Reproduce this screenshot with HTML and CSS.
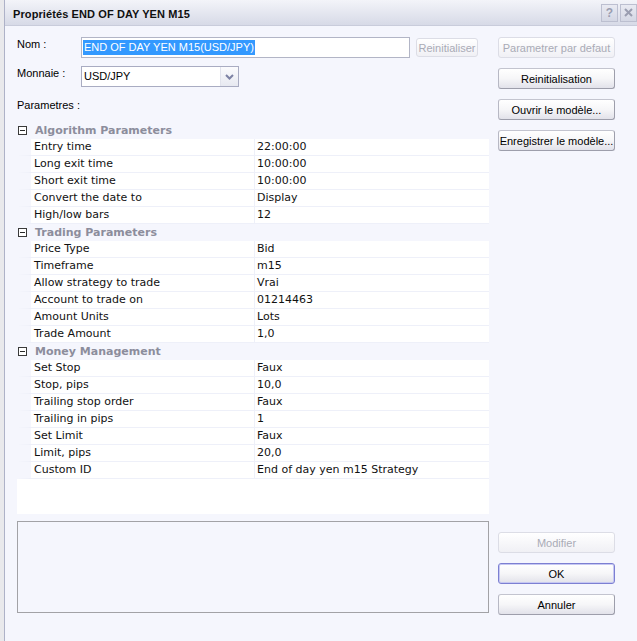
FILE: index.html
```html
<!DOCTYPE html>
<html lang="fr">
<head>
  <meta charset="UTF-8">
  <title>Propriétés END OF DAY YEN M15</title>
  <link rel="stylesheet" href="styles.css">
</head>

<body>
  <div class="screen">
    <div class="backdrop"></div>

    <div class="dialog">
      <!-- Barre de titre -->
      <div class="titlebar">
        <span class="title">Propriétés END OF DAY YEN M15</span>
        <div class="title-btns">
          <span class="tbtn">?</span>
          <span class="tbtn close">
            <svg width="9" height="9" viewBox="0 0 9 9"><path d="M1 1L8 8M8 1L1 8" stroke="#9a9db0" stroke-width="2"/></svg>
          </span>
        </div>
      </div>

      <div class="body">
        <!-- Colonne principale -->
        <div class="main">
          <div class="field-row">
            <span class="lbl">Nom :</span>
            <div class="textbox"><span class="sel">END OF DAY YEN M15(USD/JPY)</span></div>
            <button class="btn reset" disabled>Reinitialiser</button>
          </div>

          <div class="field-row second">
            <span class="lbl">Monnaie :</span>
            <div class="combo">
              <span class="combo-text">USD/JPY</span>
              <span class="combo-arrow">
                <svg width="9" height="6" viewBox="0 0 9 6"><path d="M1 1L4.5 4.5L8 1" stroke="#7d82a4" stroke-width="2" fill="none"/></svg>
              </span>
            </div>
          </div>

          <div class="section-lbl">Parametres :</div>

          <!-- Grille des proprietes -->
          <div class="grid">
            <div class="cat"><span class="toggle"></span>Algorithm Parameters</div>
            <div class="prop"><span class="name">Entry time</span><span class="val">22:00:00</span></div>
            <div class="prop"><span class="name">Long exit time</span><span class="val">10:00:00</span></div>
            <div class="prop"><span class="name">Short exit time</span><span class="val">10:00:00</span></div>
            <div class="prop"><span class="name">Convert the date to</span><span class="val">Display</span></div>
            <div class="prop"><span class="name">High/low bars</span><span class="val">12</span></div>

            <div class="cat"><span class="toggle"></span>Trading Parameters</div>
            <div class="prop"><span class="name">Price Type</span><span class="val">Bid</span></div>
            <div class="prop"><span class="name">Timeframe</span><span class="val">m15</span></div>
            <div class="prop"><span class="name">Allow strategy to trade</span><span class="val">Vrai</span></div>
            <div class="prop"><span class="name">Account to trade on</span><span class="val">01214463</span></div>
            <div class="prop"><span class="name">Amount Units</span><span class="val">Lots</span></div>
            <div class="prop"><span class="name">Trade Amount</span><span class="val">1,0</span></div>

            <div class="cat"><span class="toggle"></span>Money Management</div>
            <div class="prop"><span class="name">Set Stop</span><span class="val">Faux</span></div>
            <div class="prop"><span class="name">Stop, pips</span><span class="val">10,0</span></div>
            <div class="prop"><span class="name">Trailing stop order</span><span class="val">Faux</span></div>
            <div class="prop"><span class="name">Trailing in pips</span><span class="val">1</span></div>
            <div class="prop"><span class="name">Set Limit</span><span class="val">Faux</span></div>
            <div class="prop"><span class="name">Limit, pips</span><span class="val">20,0</span></div>
            <div class="prop"><span class="name">Custom ID</span><span class="val">End of day yen m15 Strategy</span></div>
          </div>

          <div class="desc"></div>
        </div>

        <!-- Boutons a droite -->
        <div class="side">
          <div class="side-top">
            <button class="btn" disabled>Parametrer par defaut</button>
            <button class="btn">Reinitialisation</button>
            <button class="btn">Ouvrir le modèle...</button>
            <button class="btn">Enregistrer le modèle...</button>
          </div>
          <div class="side-bottom">
            <button class="btn" disabled>Modifier</button>
            <button class="btn default">OK</button>
            <button class="btn">Annuler</button>
          </div>
        </div>
      </div>
    </div>
  </div>
</body>
</html>
```

FILE: styles.css
```css
/* ===============================
   BASE
=============================== */
html, body {
  margin: 0;
  padding: 0;
  width: 100%;
  height: 100%;
  overflow: hidden;
  background: #ececec;
}
body {
  font-family: "Liberation Sans", Arial, sans-serif;
  font-size: 11px;
  color: #000;
}

.screen {
  display: flex;
  height: 100%;
}

/* Bout de fenetre derriere */
.backdrop {
  width: 4px;
  flex: none;
  background: #e9e9ec;
}

/* ===============================
   DIALOG
=============================== */
.dialog {
  flex: none;
  width: 640px;
  border-left: 1px solid #aeb2c8;
  background: #f5f6fd;
  display: flex;
  flex-direction: column;
}

.titlebar {
  height: 26px;
  box-sizing: border-box;
  padding: 3px 0 0 8px;
  display: flex;
  align-items: center;
  border-bottom: 1px solid #c9ccdb;
  background: linear-gradient(#f3f4f9, #d7dae7);
}
.title {
  font-weight: bold;
  font-size: 11px;
  color: #101010;
  letter-spacing: 0.1px;
}
.title-btns {
  margin-left: auto;
  display: flex;
  gap: 2px;
  padding-right: 8px;
  margin-top: -3px;
}
.tbtn {
  width: 17px;
  height: 18px;
  box-sizing: border-box;
  border: 1px solid #bcbfd0;
  background: linear-gradient(#e9eaf2, #d4d7e4);
  color: #9a9db0;
  font-weight: bold;
  font-size: 12px;
  display: flex;
  align-items: center;
  justify-content: center;
}

.body {
  display: flex;
  padding: 11px 0 0 12px;
}

/* ===============================
   COLONNE PRINCIPALE
=============================== */
.main {
  width: 472px;
  flex: none;
  display: flex;
  flex-direction: column;
}

.field-row {
  display: flex;
  align-items: flex-start;
  height: 21px;
}
.field-row.second {
  margin-top: 8px;
}
.lbl {
  width: 64px;
  flex: none;
  line-height: 14px;
}

.textbox {
  width: 329px;
  height: 21px;
  box-sizing: border-box;
  border: 1px solid #b2b5c6;
  background: #fff;
  padding: 2px 1px;
  display: flex;
  align-items: center;
}
.sel {
  background: #3399ff;
  color: #fff;
  line-height: 15px;
  padding: 0 1px;
}

.combo {
  width: 158px;
  height: 21px;
  box-sizing: border-box;
  border: 1px solid #a9acc2;
  background: #fff;
  display: flex;
}
.combo-text {
  flex: 1;
  padding: 3px 2px;
}
.combo-arrow {
  width: 17px;
  border-left: 1px solid #e1e3ec;
  background: linear-gradient(#fbfbfd, #e7e9f1);
  display: flex;
  align-items: center;
  justify-content: center;
}

.section-lbl {
  margin-top: 11px;
  height: 14px;
  line-height: 14px;
  margin-bottom: 10px;
}

/* Grille */
.grid {
  height: 392px;
  background: #fff;
  font-family: "DejaVu Sans", Verdana, sans-serif;
  font-size: 11px;
  color: #111;
}
.cat {
  height: 17px;
  background: #f5f6fd;
  display: flex;
  align-items: center;
  font-weight: bold;
  color: #8c8d9c;
  padding-left: 1px;
}
.toggle {
  width: 9px;
  height: 9px;
  box-sizing: border-box;
  border: 1px solid #3a3a3a;
  margin-right: 8px;
  position: relative;
  background: #fff;
}
.toggle::after {
  content: '';
  position: absolute;
  left: 1px;
  right: 1px;
  top: 3px;
  height: 1px;
  background: #2a2a2a;
}
.prop {
  height: 17px;
  box-sizing: border-box;
  display: flex;
  border-left: 14px solid #f5f6fd;
  border-bottom: 1px solid #eef0f9;
}
.prop .name {
  width: 223px;
  padding-left: 3px;
  box-sizing: border-box;
  line-height: 16px;
}
.prop .val {
  flex: 1;
  border-left: 1px solid #eef0f9;
  padding-left: 2px;
  line-height: 16px;
}

.desc {
  margin-top: 7px;
  height: 92px;
  box-sizing: border-box;
  border: 1px solid #a2a2a6;
  margin-bottom: 2px;
}

/* ===============================
   BOUTONS
=============================== */
.side {
  width: 117px;
  flex: none;
  margin-left: 9px;
  display: flex;
  flex-direction: column;
  justify-content: space-between;
}
.side-top, .side-bottom {
  display: flex;
  flex-direction: column;
  gap: 10px;
}

.btn {
  height: 21px;
  width: 117px;
  box-sizing: border-box;
  font-family: "Liberation Sans", Arial, sans-serif;
  font-size: 11px;
  color: #000;
  padding: 0;
  border: 1px solid #9d9eab;
  border-top-color: #c3c4cf;
  border-left-color: #b7b8c4;
  border-radius: 3px;
  background: linear-gradient(#ffffff 0%, #f6f6f8 50%, #e2e2ea 100%);
}
.btn:disabled {
  color: #a9abb6;
  border-color: #dcdde6;
  background: linear-gradient(#ffffff, #f0f0f5);
}
.btn.reset {
  width: 62px;
  height: 19px;
  margin-left: 6px;
  margin-top: 1px;
}
.btn.default {
  border-color: #7c7fd2;
  box-shadow: inset 0 0 0 1px #c6c8f2;
}
```
